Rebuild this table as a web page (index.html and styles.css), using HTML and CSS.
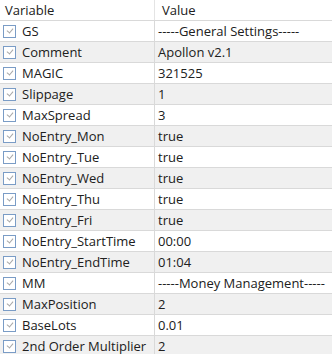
FILE: index.html
```html
<!DOCTYPE html>
<html>
<head>
<meta charset="utf-8">
<link rel="stylesheet" href="styles.css">
</head>
<body>
<div class="grid">
  <div class="head">
    <div class="hcell var">Variable</div>
    <div class="hcell val">Value</div>
  </div>
  <div class="row"><div class="cell var"><span class="cb"></span>GS</div><div class="cell val">-----General Settings-----</div></div>
  <div class="row"><div class="cell var"><span class="cb"></span>Comment</div><div class="cell val">Apollon v2.1</div></div>
  <div class="row"><div class="cell var"><span class="cb"></span>MAGIC</div><div class="cell val">321525</div></div>
  <div class="row"><div class="cell var"><span class="cb"></span>Slippage</div><div class="cell val">1</div></div>
  <div class="row"><div class="cell var"><span class="cb"></span>MaxSpread</div><div class="cell val">3</div></div>
  <div class="row"><div class="cell var"><span class="cb"></span>NoEntry_Mon</div><div class="cell val">true</div></div>
  <div class="row"><div class="cell var"><span class="cb"></span>NoEntry_Tue</div><div class="cell val">true</div></div>
  <div class="row"><div class="cell var"><span class="cb"></span>NoEntry_Wed</div><div class="cell val">true</div></div>
  <div class="row"><div class="cell var"><span class="cb"></span>NoEntry_Thu</div><div class="cell val">true</div></div>
  <div class="row"><div class="cell var"><span class="cb"></span>NoEntry_Fri</div><div class="cell val">true</div></div>
  <div class="row"><div class="cell var"><span class="cb"></span>NoEntry_StartTime</div><div class="cell val">00:00</div></div>
  <div class="row"><div class="cell var"><span class="cb"></span>NoEntry_EndTime</div><div class="cell val">01:04</div></div>
  <div class="row"><div class="cell var"><span class="cb"></span>MM</div><div class="cell val">-----Money Management-----</div></div>
  <div class="row"><div class="cell var"><span class="cb"></span>MaxPosition</div><div class="cell val">2</div></div>
  <div class="row"><div class="cell var"><span class="cb"></span>BaseLots</div><div class="cell val">0.01</div></div>
  <div class="row"><div class="cell var"><span class="cb"></span>2nd Order Multiplier</div><div class="cell val">2</div></div>
</div>
</body>
</html>
```
FILE: styles.css
```css
html, body {
  margin: 0;
  padding: 0;
  background: #ffffff;
}

body {
  font-family: "Open Sans", "Noto Sans", sans-serif;
  font-size: 13px;
  line-height: 18px;
  color: #202020;
  overflow: hidden;
}

.grid {
  display: flex;
  flex-direction: column;
  width: 332px;
}

.head,
.row {
  display: grid;
  grid-template-columns: 155px 1fr;
}

.head {
  height: 20px;
  align-items: center;
}

.hcell.var {
  padding-left: 5px;
  border-right: 1px solid #e4e4e4;
  height: 100%;
  display: flex;
  align-items: center;
}

.hcell.val {
  padding-left: 7px;
}

.row {
  height: 20px;
  border-top: 1px solid #d9d9d9;
}

.row:nth-child(odd) {
  background: #f0f0f0;
}

.cell {
  display: flex;
  align-items: center;
  white-space: nowrap;
  overflow: hidden;
}

.cell.var {
  padding-left: 3px;
  border-right: 1px solid #d9d9d9;
}

.cell.val {
  padding-left: 3px;
}

/* checkbox with a light grey tick */
.cb {
  flex: none;
  box-sizing: border-box;
  width: 13px;
  height: 13px;
  margin-right: 6px;
  border: 1px solid #7a9cc6;
  background: #ffffff;
  position: relative;
}

.cb::after {
  content: "";
  position: absolute;
  left: 3px;
  top: 2px;
  width: 5px;
  height: 3px;
  border-left: 1px solid #a8a8a8;
  border-bottom: 1px solid #a8a8a8;
  transform: rotate(-50deg);
}
```
